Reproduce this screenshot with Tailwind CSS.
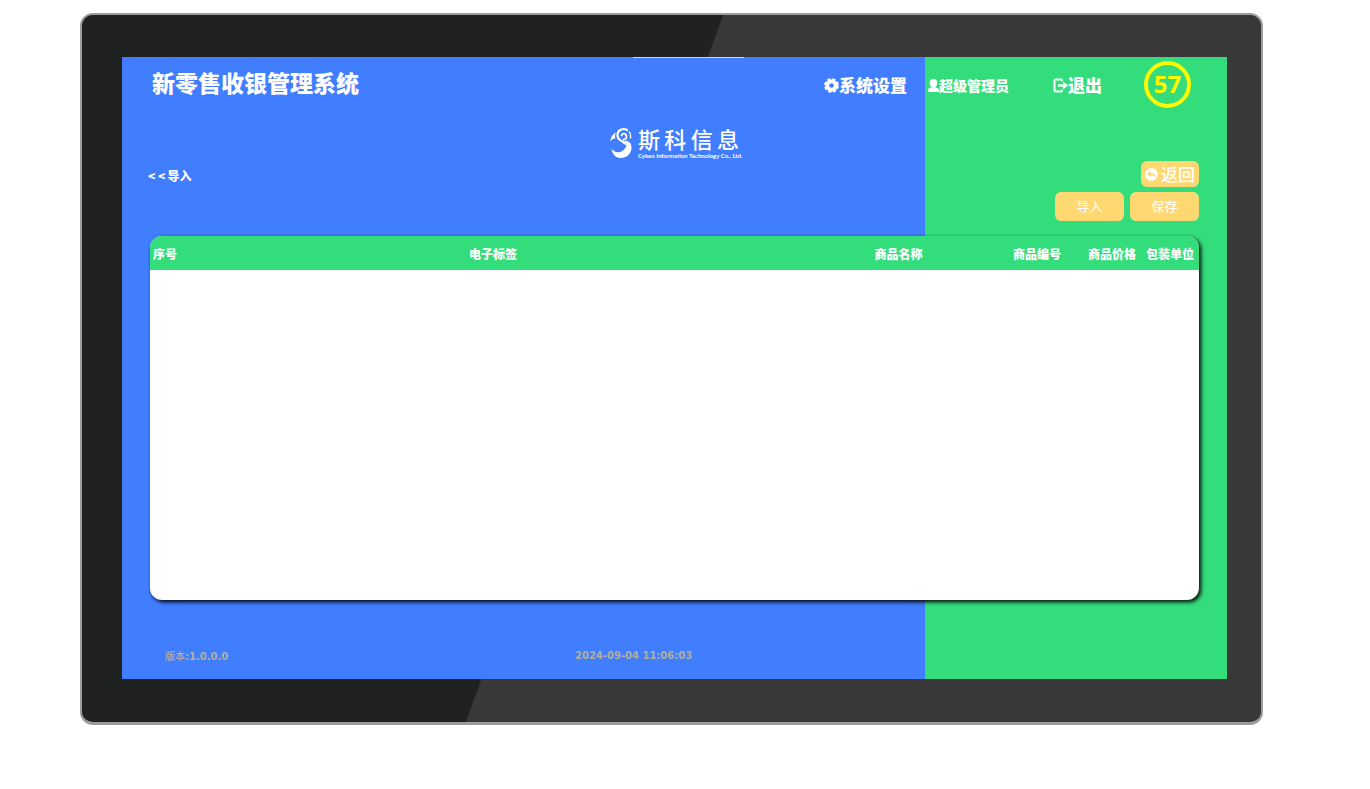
<!DOCTYPE html>
<html lang="zh-CN">
<head>
    <meta charset="utf-8">
    <meta name="viewport" content="width=device-width, initial-scale=1">
    <title>新零售收银管理系统</title>
    <script src="https://cdn.jsdelivr.net/npm/@tailwindcss/browser@4"></script>
</head>

<body class="min-h-screen bg-white text-white font-['Noto_Sans_CJK_SC',sans-serif]">
    <!-- 显示器外框 -->
    <div class="pt-[13px] pl-20 pr-[107px] pb-16">
        <div class="rounded-[13px] border-2 border-b-3 border-[#9b9b9b] bg-[linear-gradient(110deg,#202121_44.6%,#383838_44.7%)] bg-origin-border pt-[42px] pr-[34px] pb-[43px] pl-10">
            <!-- 屏幕 -->
            <div class="relative flex flex-col min-h-[622px] bg-[linear-gradient(to_right,#417dff_calc(100%-302px),#34dd7c_calc(100%-302px))]">
                <div class="absolute top-0 left-[511px] w-[111px] h-px bg-[#c3d5ff]"></div>
                <header class="flex h-[54px]">
                    <div class="flex flex-1 items-center justify-between pl-[30px] pr-[18px]">
                        <h1 class="text-[23px] leading-8 font-black pb-1">新零售收银管理系统</h1>
                        <a href="#" class="flex items-center text-[17px] leading-6 font-black pt-0.5">
                            <svg class="size-[15px]" viewBox="0 0 16 16" fill="none" stroke="currentColor">
                                <circle cx="8" cy="8" r="4.5" stroke-width="4"/>
                                <circle cx="8" cy="8" r="6.600" stroke-width="2.600" stroke-dasharray="3.400 1.784"/>
                            </svg>
                            系统设置
                        </a>
                    </div>
                    <div class="flex w-[302px] items-center pl-[3px] pr-9">
                        <a href="#" class="flex items-center text-sm font-black pt-0.5">
                            <svg class="w-[11px] h-[13px]" viewBox="0 0 11 13" fill="currentColor">
                                <ellipse cx="5.5" cy="4" rx="3.8" ry="4"/>
                                <path d="M3.6 7h3.8v1.3l2.3.9c.9.4 1.3 1 1.3 1.9V13H0v-1.900c0-.9.4-1.500 1.300-1.900l2.300-.9z"/>
                            </svg>
                            超级管理员
                        </a>
                        <a href="#" class="ml-11 flex items-center text-[17px] leading-6 font-black pt-0.5">
                            <svg class="w-[15px] h-[15px]" viewBox="0 0 15 15" fill="none" stroke="currentColor" stroke-width="2">
                                <path d="M9 1.500H2.800Q1.500 1.500 1.500 2.800V12.200Q1.500 13.500 2.800 13.500H9"/>
                                <path d="M9 1V3.500M9 11.500V14" stroke-width="1.500"/>
                                <path d="M5 7.500H11" stroke-width="2.400"/>
                                <path d="M10.200 3.500L15 7.500L10.200 11.500Z" fill="currentColor" stroke="none"/>
                            </svg>
                            退出
                        </a>
                        <span class="ml-auto flex size-[47px] items-center justify-center rounded-full border-4 border-[#fdf900] font-['Open_Sans',sans-serif] text-2xl font-bold text-[#fdf900]">57</span>
                    </div>
                </header>

                <!-- logo -->
                <div class="flex justify-center pt-4">
                    <div class="flex h-8 items-start gap-1.5">
                        <svg class="w-[22px] h-8" viewBox="0 0 22 32" fill="currentColor">
                            <path d="M1.500 21.500C4 25.800 9.500 26.500 13 23.500C17 20.500 17.500 16.500 15 13.500C20 14 22 17.500 21.500 21.500C20.800 27.500 16 31.300 10.300 31C5.500 30.700 2 27 1.500 21.500Z"/>
                            <path d="M17 3C13.500.8 8.500 2.500 7.600 6.500C6.500 11 9.500 13.500 14 15" fill="none" stroke="currentColor" stroke-width="2.200" stroke-linecap="round"/>
                            <path d="M11.500 8.500C12 6.500 14.500 6 16 7.800C17.500 10 16 12.500 13.500 12.300" fill="none" stroke="currentColor" stroke-width="1.800" stroke-linecap="round"/>
                            <path d="M8 10C9.500 14 12 16 16.500 18.500L17.500 14.500C13 14.500 10 13 8 10Z"/>
                            <path d="M5.800 5.500C3 7 .8 9.700.2 14.500C1.500 12.600 3 11.700 5.300 11.500C4.900 9.500 5 7.500 5.800 5.500Z"/>
                            <path d="M18.800 4.500C20.500 6 21 8.500 20.300 11.500" fill="none" stroke="currentColor" stroke-width="1.400"/>
                        </svg>
                        <div class="w-[101px]">
                            <div class="flex justify-between text-[22px] leading-[22px] font-medium">
                                <span>斯</span><span>科</span><span>信</span><span>息</span>
                            </div>
                            <div class="whitespace-nowrap font-['Lato',sans-serif] text-[6px] leading-[14px] font-bold">Cykeo Information Technology Co., Ltd.</div>
                        </div>
                    </div>
                </div>

                <main class="flex flex-1 flex-col pt-0.5 pl-7 pr-7">
                    <div class="flex items-center justify-between">
                        <a href="#" class="-ml-0.5 flex gap-0.5 text-xs font-black pt-1"><span>&lt; &lt;</span>导入</a>
                        <button class="flex h-[26px] w-[58px] items-center justify-center gap-[3px] rounded-md bg-[#ffd871] text-[17px] leading-6 font-medium">
                            <svg class="size-[13px]" viewBox="0 0 13 13">
                                <circle cx="6.500" cy="6.500" r="6.500" fill="#fff"/>
                                <path d="M2 6L5.600 3V4.900C8.800 4.900 10.500 6.300 10.700 9.500C9.500 7.800 8 7.200 5.600 7.200V9Z" fill="#ffd871"/>
                            </svg>
                            返回
                        </button>
                    </div>
                    <div class="mt-[5px] flex justify-end gap-1.5">
                        <button class="h-[29px] w-[69px] rounded-md bg-[#ffd871] pb-0.5 text-[13px]">导入</button>
                        <button class="h-[29px] w-[69px] rounded-md bg-[#ffd871] pb-0.5 text-[13px]">保存</button>
                    </div>

                    <!-- 商品列表 -->
                    <div class="mt-[15px] flex-1 overflow-hidden rounded-xl bg-white shadow-[2px_2px_4px_0px_#000]">
                        <table class="w-full table-fixed text-xs">
                            <colgroup>
                                <col class="w-[30px]">
                                <col>
                                <col class="w-[185px]">
                                <col class="w-[92px]">
                                <col class="w-[58px]">
                                <col class="w-[58px]">
                            </colgroup>
                            <thead>
                                <tr class="h-[34px] bg-[#34dd7c] whitespace-nowrap">
                                    <th class="p-0 pt-0.5 font-black">序号</th>
                                    <th class="p-0 pt-0.5 font-black">电子标签</th>
                                    <th class="p-0 pt-0.5 font-black">商品名称</th>
                                    <th class="p-0 pt-0.5 font-black">商品编号</th>
                                    <th class="p-0 pt-0.5 font-black">商品价格</th>
                                    <th class="p-0 pt-0.5 font-black">包装单位</th>
                                </tr>
                            </thead>
                            <tbody></tbody>
                        </table>
                    </div>
                </main>

                <footer class="flex pt-12 pb-3.5 pl-[43px] font-['DejaVu_Sans',sans-serif] text-[10px] leading-4 font-bold text-[#aeb09c]">
                    <span class="w-[410px]"><span class="font-['Noto_Sans_CJK_SC'] font-medium">版本</span>:1.0.0.0</span>
                    <time>2024-09-04 11:06:03</time>
                </footer>
            </div>
        </div>
    </div>
</body>
</html>
